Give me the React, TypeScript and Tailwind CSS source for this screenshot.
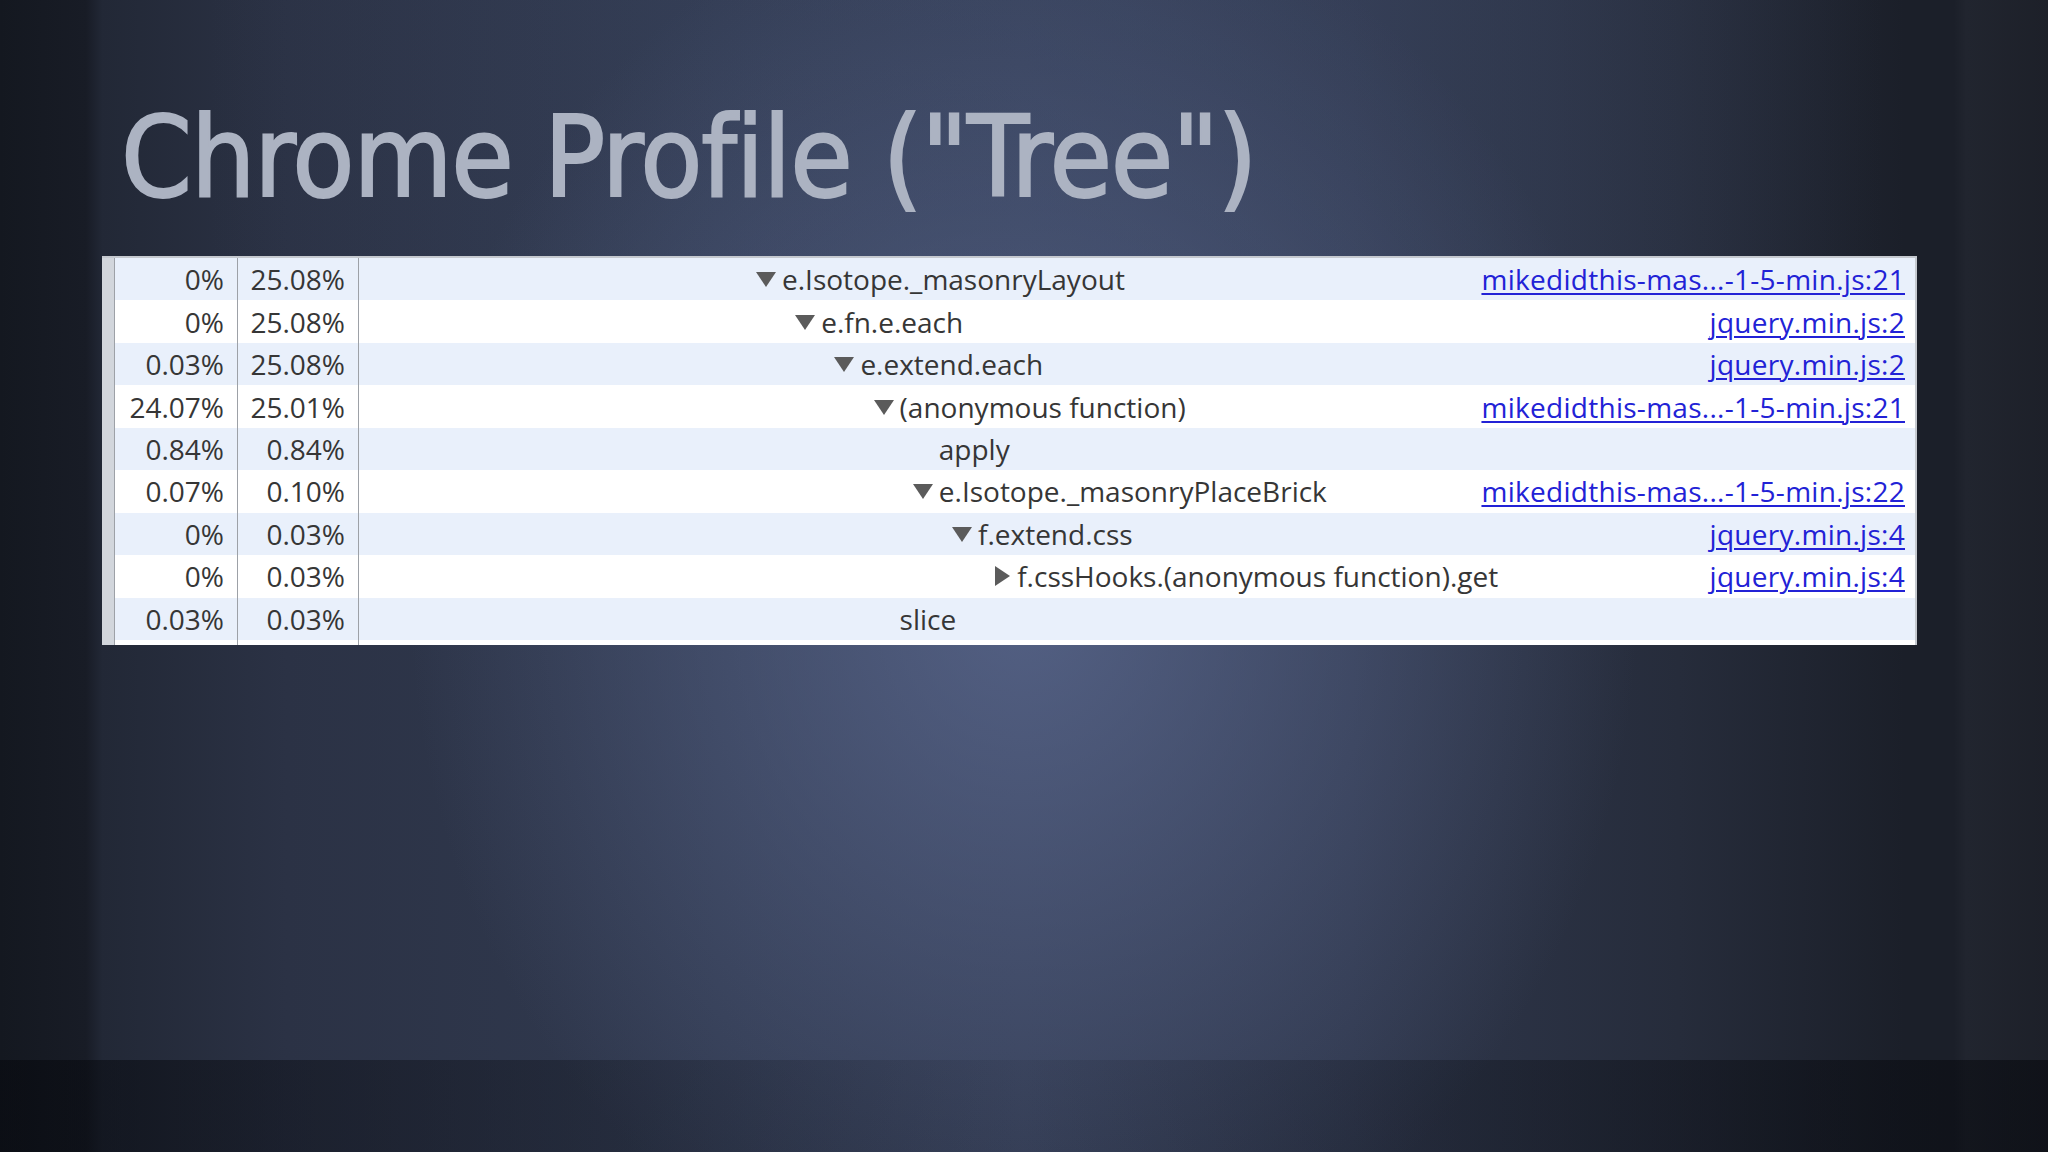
import React from "react";

type ProfileRow = {
  self: string;
  total: string;
  level: number;
  arrow: "down" | "right" | null;
  name: string;
  url?: string;
};

const ROWS: ProfileRow[] = [
  { self: "0%", total: "25.08%", level: 0, arrow: "down", name: "e.Isotope._masonryLayout", url: "mikedidthis-mas...-1-5-min.js:21" },
  { self: "0%", total: "25.08%", level: 1, arrow: "down", name: "e.fn.e.each", url: "jquery.min.js:2" },
  { self: "0.03%", total: "25.08%", level: 2, arrow: "down", name: "e.extend.each", url: "jquery.min.js:2" },
  { self: "24.07%", total: "25.01%", level: 3, arrow: "down", name: "(anonymous function)", url: "mikedidthis-mas...-1-5-min.js:21" },
  { self: "0.84%", total: "0.84%", level: 4, arrow: null, name: "apply" },
  { self: "0.07%", total: "0.10%", level: 4, arrow: "down", name: "e.Isotope._masonryPlaceBrick", url: "mikedidthis-mas...-1-5-min.js:22" },
  { self: "0%", total: "0.03%", level: 5, arrow: "down", name: "f.extend.css", url: "jquery.min.js:4" },
  { self: "0%", total: "0.03%", level: 6, arrow: "right", name: "f.cssHooks.(anonymous function).get", url: "jquery.min.js:4" },
  { self: "0.03%", total: "0.03%", level: 3, arrow: null, name: "slice" },
];

// tree column starts at x=359; first node sits ~397px in, 39px per level
const INDENT_BASE = 397;
const INDENT_STEP = 39.2;

function Disclosure({ dir }: { dir: "down" | "right" | null }) {
  if (!dir) return <span className="inline-block w-[26px] shrink-0" />;
  return (
    <span className="inline-flex w-[26px] shrink-0 items-center">
      {dir === "down" ? (
        <svg width="20" height="16" viewBox="0 0 20 16">
          <polygon points="0,1 20,1 10,16" fill="#5b5b5b" />
        </svg>
      ) : (
        <svg width="16" height="20" viewBox="0 0 16 20" className="ml-[3px]">
          <polygon points="1,0 16,10 1,20" fill="#5b5b5b" />
        </svg>
      )}
    </span>
  );
}

function TreeRow({ row, index }: { row: ProfileRow; index: number }) {
  const stripe = index % 2 === 0 ? "bg-[#e9f0fb]" : "bg-white";
  return (
    <div className={`grid h-[42.45px] grid-cols-[123px_121px_1fr] ${stripe}`}>
      <div className="flex items-center justify-end border-r border-[#9da1a7] pr-[13px]">{row.self}</div>
      <div className="flex items-center justify-end border-r border-[#9da1a7] pr-[13px]">{row.total}</div>
      <div className="flex items-center pr-[10px]">
        <div
          className="flex items-center whitespace-nowrap"
          style={{ paddingLeft: INDENT_BASE + row.level * INDENT_STEP }}
        >
          <Disclosure dir={row.arrow} />
          <span>{row.name}</span>
        </div>
        <div className="flex-1" />
        {row.url && (
          <span className="whitespace-nowrap tracking-[0.01em] text-[#2222d6] underline decoration-[2px] underline-offset-[3px]">
            {row.url}
          </span>
        )}
      </div>
    </div>
  );
}

export default function App() {
  return (
    <div className="flex h-[1152px] w-[2048px] flex-col overflow-hidden bg-[#20252f] bg-[radial-gradient(ellipse_30%_62%_at_50%_52%,rgba(92,106,145,0.78),rgba(92,106,145,0)_100%),linear-gradient(to_right,#141820_0%,#181c26_4.2%,#222836_5%,#2b3245_14%,#313a50_35%,#333c53_50%,#2f374c_66%,#262c3b_82%,#1b1f29_93%,#1b1f29_95.4%,#21252f_96%,#1d2029_100%)]">
      <div className="h-[256px] shrink-0 bg-[linear-gradient(to_right,rgba(0,0,0,0)_10%,rgba(70,84,118,0.3)_55%,rgba(70,84,118,0.22)_75%,rgba(0,0,0,0)_92%)] pl-[121px] pt-[101px]">
        <h1 className="font-['DejaVu_Sans_Condensed','DejaVu_Sans',sans-serif] text-[113px] leading-none tracking-[-0.01em] text-[#acb3c2] [-webkit-text-stroke:2px_#acb3c2]">
          Chrome Profile ("Tree")
        </h1>
      </div>

      <div className="flex-1">
        <div className="ml-[102px] flex w-[1815px] border-t-2 border-r-2 border-[#c5c9cf] bg-white font-['Open_Sans',sans-serif] text-[28px] text-[#363636]">
          <div className="w-[13px] shrink-0 border-r border-[#9da1a7] bg-[#d2d6dc]" />
          <div className="flex-1">
            {ROWS.map((row, i) => (
              <TreeRow key={i} row={row} index={i} />
            ))}
            <div className="grid h-[5px] grid-cols-[123px_121px_1fr]">
              <div className="border-r border-[#9da1a7]" />
              <div className="border-r border-[#9da1a7]" />
              <div />
            </div>
          </div>
        </div>
      </div>

      <div className="h-[92px] shrink-0 bg-[linear-gradient(to_right,rgba(5,7,12,0.55)_0%,rgba(5,7,12,0.3)_25%,rgba(5,7,12,0.08)_50%,rgba(5,7,12,0.3)_75%,rgba(5,7,12,0.55)_100%)]" />
    </div>
  );
}
